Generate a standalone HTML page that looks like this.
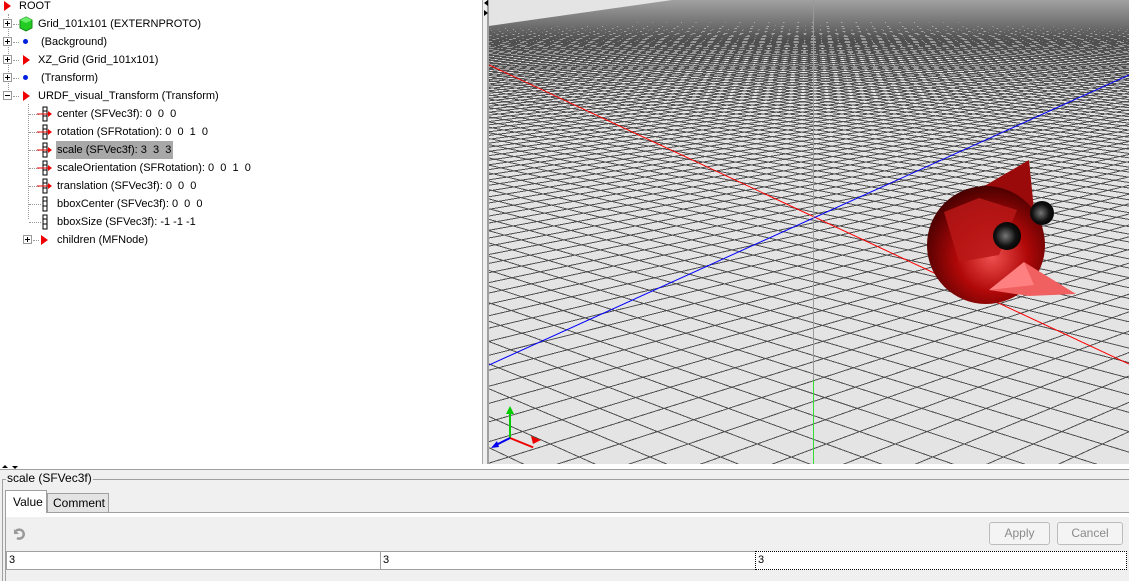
<!DOCTYPE html>
<html><head><style>
*{margin:0;padding:0;box-sizing:border-box}
html,body{overflow:hidden}
body{width:1129px;height:581px;background:#f0f0f0;font-family:"Liberation Sans",sans-serif;font-size:11px;color:#000;position:relative}
#tree{position:absolute;left:0;top:0;width:482px;height:465px;background:#fff}
.row{position:absolute;height:18px;line-height:19px;white-space:nowrap}
.tri{position:absolute;width:0;height:0;border-top:5px solid transparent;border-bottom:5px solid transparent;border-left:7px solid #e00;top:4px}
.dot{position:absolute;width:5px;height:5px;border-radius:50%;background:#0020e0;top:6px}
.pb{position:absolute;width:9px;height:9px;border:1px solid #999;background:#fff;top:4px}
.pb:before{content:"";position:absolute;left:1px;top:3px;width:5px;height:1px;background:#000}
.pb.p:after{content:"";position:absolute;left:3px;top:1px;width:1px;height:5px;background:#000}
.dl{position:absolute;border-top:1px dotted #999;height:0}
.vl{position:absolute;border-left:1px dotted #999;width:0}
.fi{position:absolute;width:15px;height:16px}
#split{position:absolute;left:482px;top:0;width:7px;height:465px;background:#f0f0f0;border-left:1px solid #aaa;border-right:2px solid #a0a0a0}
#view{position:absolute;left:489px;top:0;width:640px;height:464px;overflow:hidden;background:#e4e4e4}
#ov{position:absolute;left:0;top:0}
</style></head><body>
<div id="tree">
<div class="row" style="left:4px;top:-3px"><span class="tri" style="left:0"></span><span style="position:absolute;left:15px">ROOT</span></div>
<div class="vl" style="left:8px;top:14px;height:82px"></div>
<div class="vl" style="left:28px;top:104px;height:115px"></div>
<div class="pb p" style="left:3px;top:19px"></div><div class="dl" style="left:13px;top:24px;width:6px"></div>
<svg style="position:absolute;left:19px;top:16px" width="14" height="16"><polygon points="7,1 13,4 13,12 7,15 1,12 1,4" fill="#22cc22" stroke="#118811"/><polygon points="7,1 13,4 7,7 1,4" fill="#66ee66"/></svg>
<div class="row" style="left:38px;top:15px">Grid_101x101 (EXTERNPROTO)</div>
<div class="pb p" style="left:3px;top:37px"></div><div class="dl" style="left:13px;top:42px;width:6px"></div>
<span class="dot" style="left:23px;top:39px"></span><div class="row" style="left:41px;top:33px">(Background)</div>
<div class="pb p" style="left:3px;top:55px"></div><div class="dl" style="left:13px;top:60px;width:6px"></div>
<span class="tri" style="left:23px;top:55px"></span><div class="row" style="left:38px;top:51px">XZ_Grid (Grid_101x101)</div>
<div class="pb p" style="left:3px;top:73px"></div><div class="dl" style="left:13px;top:78px;width:6px"></div>
<span class="dot" style="left:23px;top:75px"></span><div class="row" style="left:41px;top:69px">(Transform)</div>
<div class="pb" style="left:3px;top:91px"></div><div class="dl" style="left:13px;top:96px;width:6px"></div>
<span class="tri" style="left:23px;top:91px"></span><div class="row" style="left:38px;top:87px">URDF_visual_Transform (Transform)</div>

<div class="dl" style="left:29px;top:114px;width:10px"></div><svg class="fi" style="left:37px;top:106px"><rect x="6" y="1" width="4" height="14" fill="none" stroke="#000"/><line x1="6" y1="5" x2="10" y2="5" stroke="#000"/><line x1="6" y1="10" x2="10" y2="10" stroke="#000"/><line x1="0" y1="8" x2="13" y2="8" stroke="#e00"/><polygon points="11,5 15,8 11,11" fill="#e00"/></svg><div class="row" style="left:57px;top:105px">center (SFVec3f): 0&nbsp; 0&nbsp; 0</div>
<div class="dl" style="left:29px;top:132px;width:10px"></div><svg class="fi" style="left:37px;top:124px"><rect x="6" y="1" width="4" height="14" fill="none" stroke="#000"/><line x1="6" y1="5" x2="10" y2="5" stroke="#000"/><line x1="6" y1="10" x2="10" y2="10" stroke="#000"/><line x1="0" y1="8" x2="13" y2="8" stroke="#e00"/><polygon points="11,5 15,8 11,11" fill="#e00"/></svg><div class="row" style="left:57px;top:123px">rotation (SFRotation): 0&nbsp; 0&nbsp; 1&nbsp; 0</div>
<div class="dl" style="left:29px;top:150px;width:10px"></div><svg class="fi" style="left:37px;top:142px"><rect x="6" y="1" width="4" height="14" fill="none" stroke="#000"/><line x1="6" y1="5" x2="10" y2="5" stroke="#000"/><line x1="6" y1="10" x2="10" y2="10" stroke="#000"/><line x1="0" y1="8" x2="13" y2="8" stroke="#e00"/><polygon points="11,5 15,8 11,11" fill="#e00"/></svg><div class="row" style="left:56px;top:141px;background:#a8a8a8;padding:0 2px 0 1px">scale (SFVec3f): 3&nbsp; 3&nbsp; 3</div>
<div class="dl" style="left:29px;top:168px;width:10px"></div><svg class="fi" style="left:37px;top:160px"><rect x="6" y="1" width="4" height="14" fill="none" stroke="#000"/><line x1="6" y1="5" x2="10" y2="5" stroke="#000"/><line x1="6" y1="10" x2="10" y2="10" stroke="#000"/><line x1="0" y1="8" x2="13" y2="8" stroke="#e00"/><polygon points="11,5 15,8 11,11" fill="#e00"/></svg><div class="row" style="left:57px;top:159px">scaleOrientation (SFRotation): 0&nbsp; 0&nbsp; 1&nbsp; 0</div>
<div class="dl" style="left:29px;top:186px;width:10px"></div><svg class="fi" style="left:37px;top:178px"><rect x="6" y="1" width="4" height="14" fill="none" stroke="#000"/><line x1="6" y1="5" x2="10" y2="5" stroke="#000"/><line x1="6" y1="10" x2="10" y2="10" stroke="#000"/><line x1="0" y1="8" x2="13" y2="8" stroke="#e00"/><polygon points="11,5 15,8 11,11" fill="#e00"/></svg><div class="row" style="left:57px;top:177px">translation (SFVec3f): 0&nbsp; 0&nbsp; 0</div>
<div class="dl" style="left:29px;top:204px;width:12px"></div><svg class="fi" style="left:37px;top:196px"><rect x="6" y="1" width="4" height="14" fill="none" stroke="#000"/><line x1="6" y1="5" x2="10" y2="5" stroke="#000"/><line x1="6" y1="10" x2="10" y2="10" stroke="#000"/></svg><div class="row" style="left:57px;top:195px">bboxCenter (SFVec3f): 0&nbsp; 0&nbsp; 0</div>
<div class="dl" style="left:29px;top:222px;width:12px"></div><svg class="fi" style="left:37px;top:214px"><rect x="6" y="1" width="4" height="14" fill="none" stroke="#000"/><line x1="6" y1="5" x2="10" y2="5" stroke="#000"/><line x1="6" y1="10" x2="10" y2="10" stroke="#000"/></svg><div class="row" style="left:57px;top:213px">bboxSize (SFVec3f): -1 -1 -1</div>
<div class="pb p" style="left:23px;top:235px"></div><div class="dl" style="left:33px;top:240px;width:6px"></div>
<span class="tri" style="left:41px;top:235px"></span><div class="row" style="left:57px;top:231px">children (MFNode)</div>
</div>
<div id="split"><div style="position:absolute;left:1px;top:0;border-top:3px solid transparent;border-bottom:3px solid transparent;border-right:4px solid #000"></div><div style="position:absolute;left:1px;top:10px;border-top:3px solid transparent;border-bottom:3px solid transparent;border-left:4px solid #000"></div></div>
<div id="view">
<svg id="ov" width="640" height="464">
<defs><linearGradient id="fade" x1="0" y1="0" x2="0" y2="1"><stop offset="0" stop-color="#e4e4e4" stop-opacity="0.55"/><stop offset="1" stop-color="#e4e4e4" stop-opacity="0"/></linearGradient>
<radialGradient id="rg" cx="0.55" cy="0.6" r="0.6"><stop offset="0" stop-color="#f05050"/><stop offset="0.5" stop-color="#b00808"/><stop offset="1" stop-color="#4a0000"/></radialGradient>
<radialGradient id="eg" cx="0.45" cy="0.5" r="0.6"><stop offset="0" stop-color="#777"/><stop offset="0.6" stop-color="#111"/><stop offset="1" stop-color="#000"/></radialGradient></defs>
<g id="grid" stroke="#505050" stroke-width="1" fill="none" shape-rendering="crispEdges"></g>
<rect x="0" y="0" width="640" height="40" fill="url(#fade)"/>
<polygon points="0,0 183,0 0,26" fill="#e4e4e4"/>
<line x1="0" y1="65" x2="640" y2="364" stroke="#f00" stroke-width="1"/>
<line x1="0" y1="365" x2="640" y2="75" stroke="#00f" stroke-width="1"/>
<line x1="324.5" y1="0" x2="324.5" y2="380" stroke="#999" stroke-width="1"/>
<line x1="324.5" y1="380" x2="324.5" y2="464" stroke="#33dd33" stroke-width="1"/>
<line x1="21" y1="438" x2="21" y2="412" stroke="#0c0" stroke-width="2"/><polygon points="17,414 21,406 25,414" fill="#0c0"/>
<line x1="21" y1="438" x2="46" y2="438" stroke="#e00" stroke-width="2" transform="rotate(22 21 438)"/><polygon points="42,436 52,440 44,444" fill="#e00"/>
<line x1="21" y1="438" x2="5" y2="446" stroke="#00e" stroke-width="2"/><polygon points="2,448 8,441 10,447" fill="#00e"/>
<polygon points="480,195 540,160 548,240 510,230" fill="#9a0a0a"/>
<circle cx="497" cy="245" r="59" fill="url(#rg)"/>
<polygon points="455,212 490,198 528,210 510,255 470,262" fill="#b81818" opacity="0.85"/>
<polygon points="500,290 535,262 587,294 540,296" fill="#f06060"/>
<polygon points="500,290 535,262 545,285" fill="#ff8080"/>
<circle cx="553" cy="213" r="12" fill="url(#eg)"/>
<circle cx="518" cy="236" r="14" fill="url(#eg)"/>
</svg></div>
<script>
(function(){var g=document.getElementById('grid'),s='',yh=-90,yb=560,F=1450,cx=320,sp=84;
for(var k=-200;k<=200;k++){var xb=cx+k*sp;
s+='<line x1="'+(cx-F)+'" y1="'+yh+'" x2="'+xb+'" y2="'+yb+'"/>';
s+='<line x1="'+(cx+F)+'" y1="'+yh+'" x2="'+(xb+sp/2)+'" y2="'+yb+'"/>';}
g.innerHTML=s;})();
</script>
<div style="position:absolute;left:0;top:464px;width:1129px;height:5px;background:#fff"></div>
<div style="position:absolute;left:0;top:469px;width:1129px;height:1px;background:#a0a0a0"></div>
<div style="position:absolute;left:2px;top:465px;border-left:3px solid transparent;border-right:3px solid transparent;border-bottom:3px solid #000"></div>
<div style="position:absolute;left:12px;top:466px;border-left:3px solid transparent;border-right:3px solid transparent;border-top:3px solid #000"></div>
<div style="position:absolute;left:2px;top:479px;width:1127px;height:102px;border:1px solid #a0a0a0;border-bottom:none;border-right:none"></div>
<div style="position:absolute;left:6px;top:471px;background:#f0f0f0;padding:0 1px;line-height:14px;font-size:12px">scale (SFVec3f)</div>
<div style="position:absolute;left:5px;top:512px;width:1124px;height:69px;background:#f0f0f0;border:1px solid #a0a0a0;border-right:none;border-bottom:none"></div>
<div style="position:absolute;left:5px;top:490px;width:42px;height:23px;background:#fff;border:1px solid #a0a0a0;border-bottom:none;padding:4px 0 0 7px;font-size:12px">Value</div>
<div style="position:absolute;left:47px;top:493px;width:62px;height:19px;background:#e4e4e4;border:1px solid #a0a0a0;border-bottom:none;padding:2px 0 0 5px;font-size:12px">Comment</div>
<div style="position:absolute;left:6px;top:513px;width:1123px;height:4px;background:#fff"></div>
<svg style="position:absolute;left:11px;top:526px" width="14" height="14"><path d="M3 3 L3 8 L8 8 Z" fill="#999"/><path d="M5 5 A4.5 4.5 0 1 1 6 12" fill="none" stroke="#999" stroke-width="2.5"/></svg>
<div style="position:absolute;left:989px;top:522px;width:61px;height:23px;border:1px solid #bcbcbc;border-radius:3px;background:#f4f4f4;color:#8a8a8a;text-align:center;line-height:21px;font-size:12px">Apply</div>
<div style="position:absolute;left:1057px;top:522px;width:66px;height:23px;border:1px solid #bcbcbc;border-radius:3px;background:#f4f4f4;color:#8a8a8a;text-align:center;line-height:21px;font-size:12px">Cancel</div>
<div style="position:absolute;left:6px;top:551px;width:375px;height:19px;background:#fff;border:1px solid #a0a0a0;line-height:17px;padding-left:2px">3</div>
<div style="position:absolute;left:380px;top:551px;width:376px;height:19px;background:#fff;border:1px solid #a0a0a0;line-height:17px;padding-left:2px">3</div>
<div style="position:absolute;left:755px;top:551px;width:372px;height:19px;background:#fff;border:1px dotted #000;line-height:17px;padding-left:2px">3</div>
</body></html>
